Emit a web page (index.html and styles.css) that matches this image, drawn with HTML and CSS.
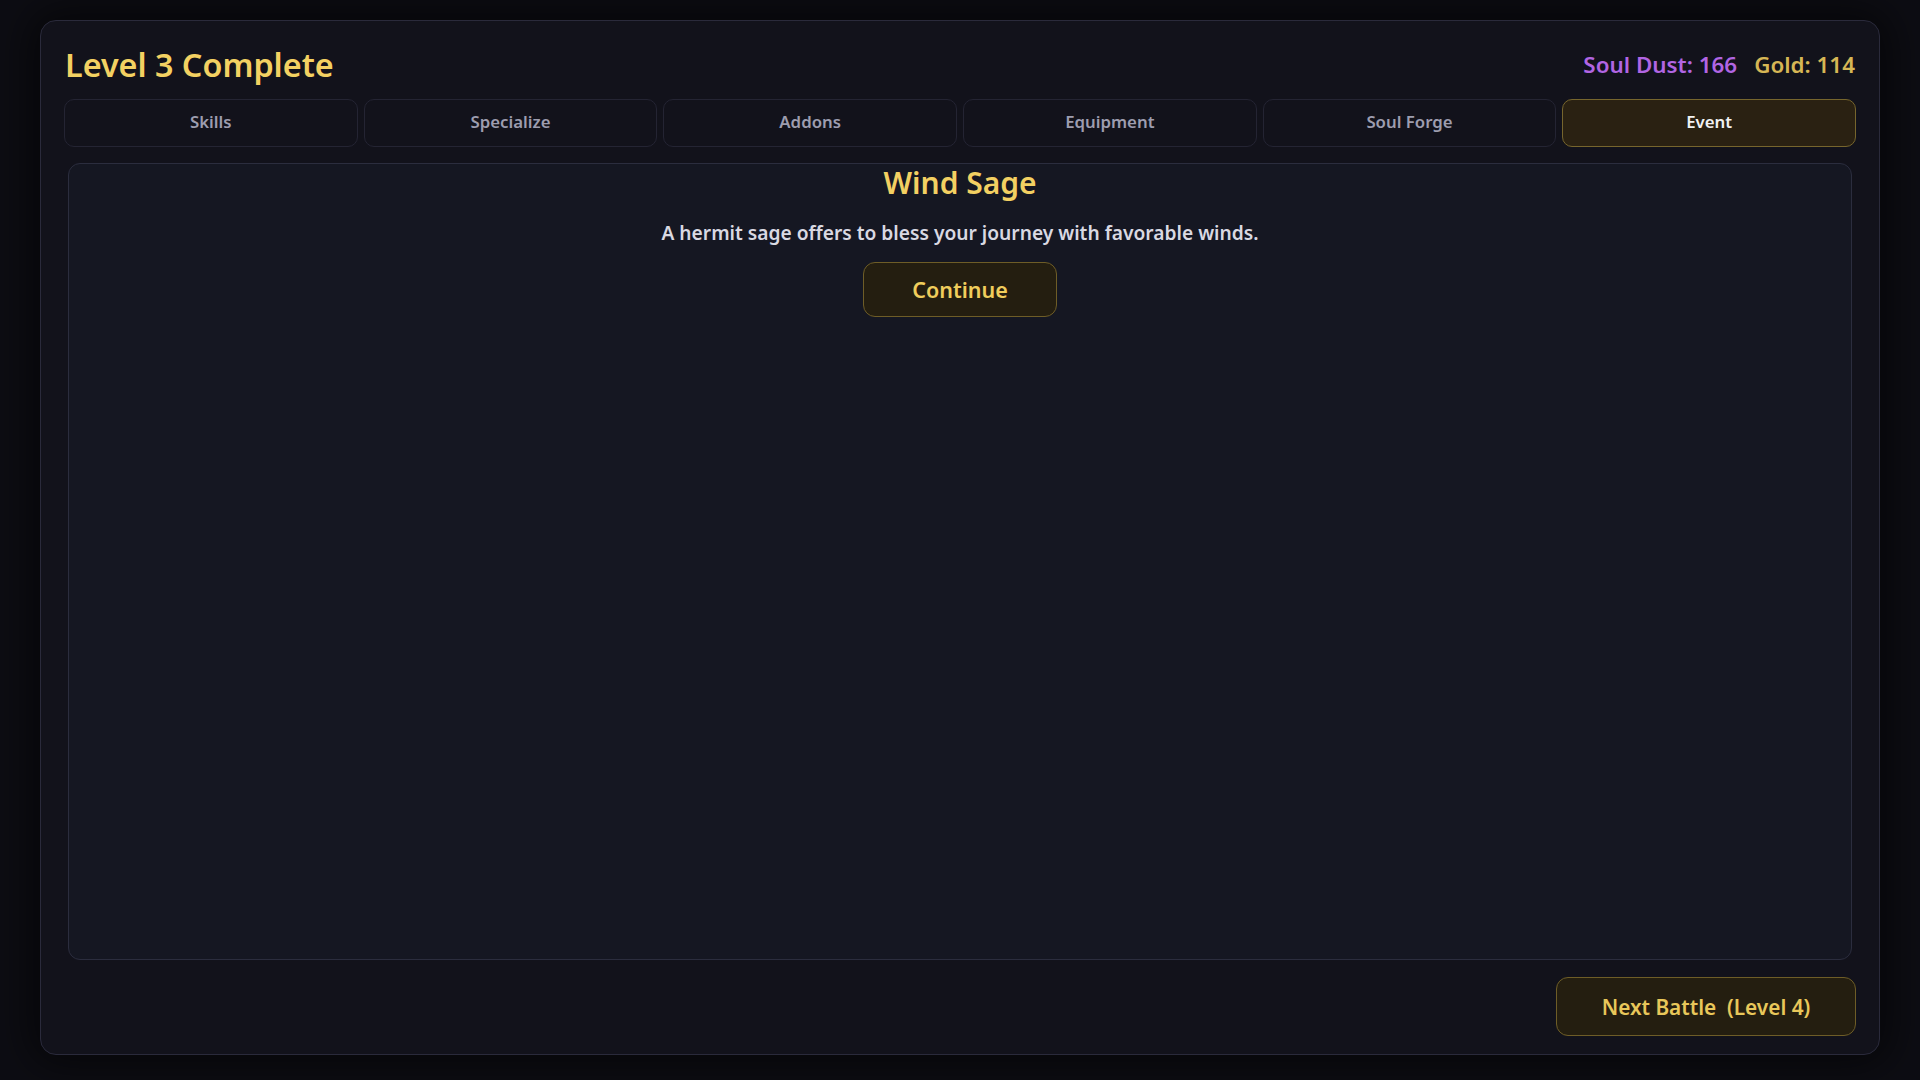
FILE: index.html
```html
<!DOCTYPE html>
<html lang="en">
<head>
<meta charset="utf-8">
<title>Level 3 Complete</title>
<link rel="stylesheet" href="styles.css">
</head>
<body>
<div class="panel">
  <header class="panel-header">
    <h1 class="title">Level 3 Complete</h1>
    <div class="stats">
      <span class="stat stat-dust">Soul Dust: 166</span>
      <span class="stat stat-gold">Gold: 114</span>
    </div>
  </header>
  <nav class="tabs">
    <button class="tab">Skills</button>
    <button class="tab">Specialize</button>
    <button class="tab">Addons</button>
    <button class="tab">Equipment</button>
    <button class="tab">Soul Forge</button>
    <button class="tab tab-active">Event</button>
  </nav>
  <section class="content">
    <h2 class="event-title">Wind Sage</h2>
    <p class="event-desc">A hermit sage offers to bless your journey with favorable winds.</p>
    <button class="btn-gold btn-continue">Continue</button>
  </section>
  <footer class="panel-footer">
    <button class="btn-gold btn-next">Next Battle&nbsp; (Level 4)</button>
  </footer>
</div>
</body>
</html>
```
FILE: styles.css
```css
* { box-sizing: border-box; }
html, body {
  margin: 0;
  padding: 0;
  background: #0d0d13;
  font-family: "Noto Sans", "Open Sans", sans-serif;
}
body {
  width: 1920px;
  height: 1080px;
  overflow: hidden;
}
.panel {
  margin: 20px 40px 0;
  width: 1840px;
  height: 1035px;
  background: #12121b;
  border: 1px solid #2a2a3b;
  border-radius: 16px;
  box-shadow: 0 0 40px 10px rgba(0, 0, 0, 0.55);
  padding: 23px 23px 18px;
  display: flex;
  flex-direction: column;
}
.panel-header {
  display: flex;
  justify-content: space-between;
  align-items: center;
  height: 40px;
  margin-bottom: 15px;
  padding-left: 1px;
}
.title {
  margin: 0;
  font-size: 32.3px;
  line-height: 40px;
  font-weight: 600;
  color: #f3d162;
}
.stats {
  display: flex;
  gap: 17px;
  font-size: 22.4px;
  font-weight: 600;
  padding-right: 1px;
}
.stat-dust { color: #b165e3; }
.stat-gold { color: #d6b655; }
.tabs {
  display: grid;
  grid-template-columns: repeat(6, 1fr);
  gap: 6px;
  height: 48px;
  margin-bottom: 16px;
}
.tab {
  font-family: inherit;
  font-size: 16.8px;
  font-weight: 600;
  color: #9d9daf;
  background: #12121b;
  border: 1px solid #242433;
  border-radius: 10px;
  padding: 0 0 4px;
  cursor: pointer;
}
.tab-active {
  background: #2a2112;
  border-color: #76652d;
  color: #f2f2f2;
}
.content {
  flex: 1;
  margin: 0 4px;
  background: #151722;
  border: 1px solid #2b2d3e;
  border-radius: 12px;
  display: flex;
  flex-direction: column;
  align-items: center;
}
.event-title {
  margin: 1px 0 0;
  font-size: 30px;
  line-height: 36px;
  font-weight: 600;
  color: #f3d062;
}
.event-desc {
  margin: 18px 0 0;
  font-size: 19.2px;
  line-height: 27px;
  font-weight: 600;
  color: #d9d9e2;
}
.btn-gold {
  font-family: inherit;
  font-weight: 600;
  color: #f0cd5c;
  background: #241e10;
  border: 1px solid #6e5d27;
  border-radius: 12px;
  cursor: pointer;
}
.btn-continue {
  margin-top: 16px;
  width: 194px;
  height: 55px;
  font-size: 21.5px;
}
.panel-footer {
  display: flex;
  justify-content: flex-end;
  margin-top: 17px;
}
.btn-next {
  width: 300px;
  height: 59px;
  font-size: 20.8px;
  color: #e8c75a;
}
```
